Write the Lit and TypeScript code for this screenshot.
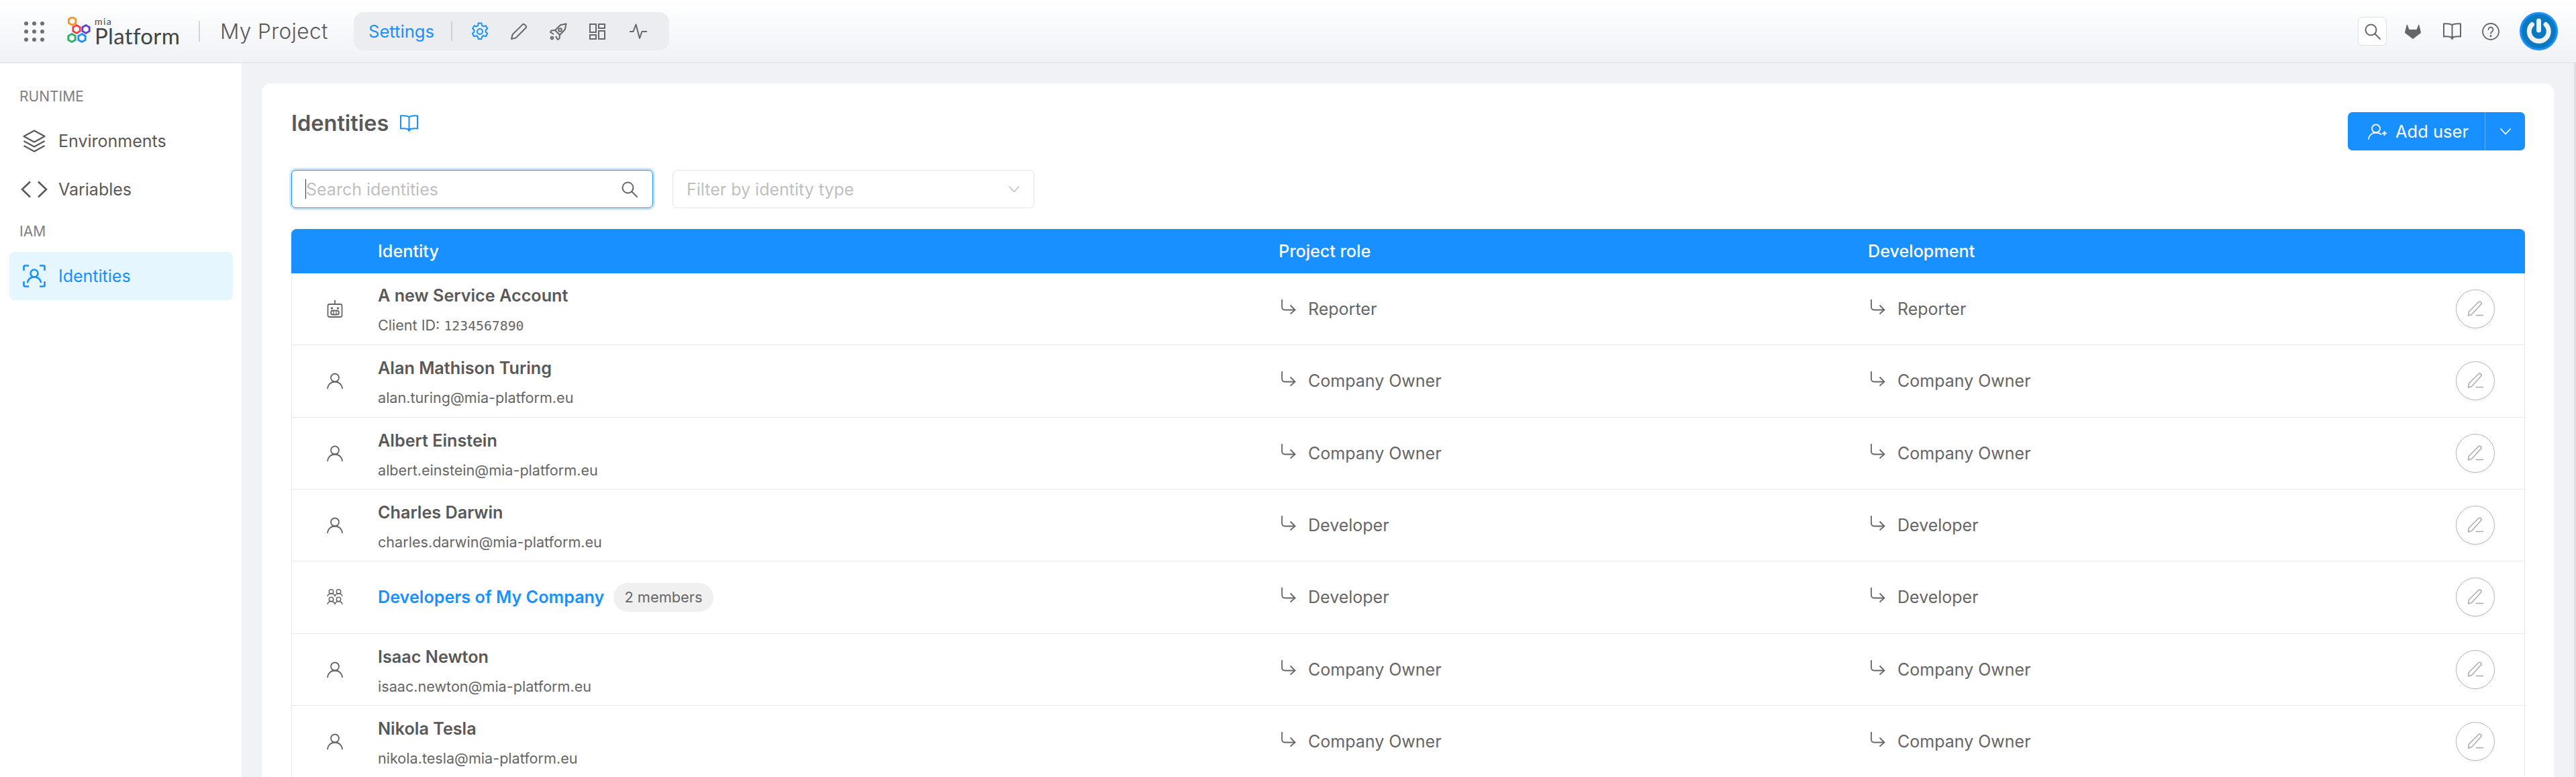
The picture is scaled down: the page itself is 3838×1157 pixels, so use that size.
import { LitElement, html, svg, css } from 'lit';
import { customElement } from 'lit/decorators.js';

const ICONS: Record<string, any> = {
  gear: html`<svg viewBox="0 0 28 28" width="28" height="28" fill="none" stroke="currentColor" stroke-width="2" stroke-linejoin="round"><path d="M11.6 1.6h4.8l.8 3.6 2.2 1.2 3.4-1.1 2.4 4.2-2.6 2.5v2.5l2.6 2.5-2.4 4.2-3.4-1.1-2.2 1.2-.8 3.6h-4.8l-.8-3.6-2.2-1.2-3.4 1.1-2.4-4.2 2.6-2.5V12L3.2 9.5l2.4-4.2L9 6.4l2.2-1.2z"/><circle cx="14" cy="14" r="4"/></svg>`,
  pencil: html`<svg viewBox="0 0 26 26" width="26" height="26" fill="none" stroke="currentColor" stroke-width="2" stroke-linejoin="round"><path d="M2 24l1.6-6.6L18.5 2.6a2.2 2.2 0 0 1 3.1 0l1.8 1.8a2.2 2.2 0 0 1 0 3.1L8.6 22.4z"/></svg>`,
  rocket: html`<svg viewBox="0 0 26 26" width="26" height="26" fill="none" stroke="currentColor" stroke-width="2" stroke-linejoin="round"><path d="M24.5 1.5l-8.5 1.8L8 11l7 7 7.7-8z"/><path d="M8 11l-5.5.5L1 14l5 3M15 18l-.5 5.5L12 25l-3-5"/><circle cx="15.5" cy="10.5" r="2.3"/><circle cx="3.5" cy="22.5" r="1.8"/></svg>`,
  dash: html`<svg viewBox="0 0 24 24" width="24" height="24" fill="none" stroke="currentColor" stroke-width="2"><rect x="1" y="1" width="9" height="12"/><rect x="14" y="1" width="9" height="6"/><rect x="1" y="17" width="9" height="6"/><rect x="14" y="11" width="9" height="12"/></svg>`,
  pulse: html`<svg viewBox="0 0 26 24" width="26" height="24" fill="none" stroke="currentColor" stroke-width="2" stroke-linejoin="round"><path d="M0 12h5.5L9.5 1.5 15 22l3.5-10H26"/></svg>`,
  search: html`<svg viewBox="0 0 26 26" width="26" height="26" fill="none" stroke="currentColor" stroke-width="2"><circle cx="10.5" cy="10.5" r="8"/><path d="M16.5 16.5l7.5 7.5" stroke-linecap="round"/></svg>`,
  gitlab: html`<svg viewBox="0 0 24 22" width="24" height="22" fill="currentColor"><path d="M12 22L.6 13.4C0 13 0 12.4.1 11.8L2.8.8c.1-.4.6-.4.8 0L6.5 8h11L20.4.8c.2-.4.7-.4.8 0l2.7 11c.1.6.1 1.2-.5 1.6z"/></svg>`,
  book: html`<svg viewBox="0 0 27 25" width="27" height="25" fill="none" stroke="currentColor" stroke-width="2"><path d="M13.5 3.5C11 1.5 6 1 1 1.5v19c5-.4 10 0 12.5 1.5C16 20.5 21 20.1 26 20.5v-19c-5-.5-10 0-12.5 2zM13.5 3.5V22"/><path d="M12 22l1.5 2 1.5-2"/></svg>`,
  help: html`<svg viewBox="0 0 26 26" width="26" height="26" fill="none" stroke="currentColor" stroke-width="1.8"><circle cx="13" cy="13" r="12"/><path d="M9.5 10a3.5 3.5 0 1 1 5.5 2.9c-1.2.8-2 1.4-2 2.9" stroke-linecap="round"/><circle cx="13" cy="19.5" r=".7" fill="currentColor"/></svg>`,
  layers: html`<svg viewBox="0 0 34 34" width="34" height="34" fill="none" stroke="currentColor" stroke-width="2.2" stroke-linejoin="round"><path d="M17 1.5L32.5 10 17 18.5 1.5 10z"/><path d="M1.5 17L17 25.5 32.5 17"/><path d="M1.5 24L17 32.5 32.5 24"/></svg>`,
  code: html`<svg viewBox="0 0 40 26" width="40" height="26" fill="none" stroke="currentColor" stroke-width="2.6"><path d="M14 1.5L2 13l12 11.5M26 1.5L38 13 26 24.5"/></svg>`,
  scan: html`<svg viewBox="0 0 34 34" width="34" height="34" fill="none" stroke="currentColor" stroke-width="2.6" stroke-linejoin="round"><path d="M9 1.5H3A1.5 1.5 0 0 0 1.5 3v6M25 1.5h6A1.5 1.5 0 0 1 32.5 3v6M9 32.5H3A1.5 1.5 0 0 1 1.5 31v-6M25 32.5h6a1.5 1.5 0 0 0 1.5-1.5v-6"/><circle cx="17" cy="13" r="5.5"/><path d="M7 26c1.5-5 5.5-7.5 10-7.5S25.5 21 27 26" stroke-linecap="round"/></svg>`,
  robot: html`<svg viewBox="0 0 24 26" width="24" height="26" fill="none" stroke="currentColor" stroke-width="1.8"><path d="M12 0v6"/><rect x="1.5" y="6" width="21" height="19" rx="2.5"/><circle cx="7.5" cy="12" r=".8" fill="currentColor"/><circle cx="16.5" cy="12" r=".8" fill="currentColor"/><rect x="6" y="15.5" width="12" height="6" rx="3"/><path d="M10 15.5v6M14 15.5v6" stroke-width="1.2"/></svg>`,
  user: html`<svg viewBox="0 0 24 24" width="24" height="24" fill="none" stroke="currentColor" stroke-width="1.8"><circle cx="12" cy="7.5" r="6"/><path d="M1 23.5c.6-6 5-10 11-10s10.4 4 11 10" stroke-linecap="round"/></svg>`,
  group: html`<svg viewBox="0 0 24 24" width="24" height="24" fill="none" stroke="currentColor" stroke-width="1.5"><circle cx="6.5" cy="4" r="3.2"/><circle cx="17.5" cy="4" r="3.2"/><path d="M1 11c.4-2.5 2.5-4 5.5-4s5 1.5 5.5 4c.5-2.5 2.5-4 5.5-4s5.1 1.5 5.5 4"/><circle cx="6.5" cy="15.5" r="3.2"/><circle cx="17.5" cy="15.5" r="3.2"/><path d="M1 23c.4-3 2.5-4.5 5.5-4.5s5 1.5 5.5 4.5c.5-3 2.5-4.5 5.5-4.5s5.1 1.5 5.5 4.5"/></svg>`,
  arrow: html`<svg viewBox="0 0 23 22" width="23" height="22" fill="none" stroke="currentColor" stroke-width="1.8"><path d="M2 0v11c0 3 1.5 4.5 4.5 4.5H21"/><path d="M14.5 8.5l7 7-7 6"/></svg>`,
  edit: html`<svg viewBox="0 0 24 24" width="24" height="24" fill="none" stroke="currentColor" stroke-width="1.6" stroke-linejoin="round"><path d="M1.5 22l1-6L16.8 1.8a2.3 2.3 0 0 1 3.2 0l.3.3a2.3 2.3 0 0 1 0 3.2L6.5 20.5z"/><path d="M12.5 21.5h11.5"/></svg>`,
  addUser: html`<svg viewBox="0 0 28 24" width="28" height="24" fill="none" stroke="currentColor" stroke-width="1.8"><circle cx="12" cy="7.5" r="6"/><path d="M1 23c.6-5.5 5-9.5 11-9.5 3 0 5.5 1 7.5 2.5" stroke-linecap="round"/><path d="M21 14.5h7M24.5 11v7"/></svg>`,
  chevron: html`<svg viewBox="0 0 18 12" width="18" height="12" fill="none" stroke="currentColor" stroke-width="1.8"><path d="M1.5 1.5L9 9.5l7.5-8"/></svg>`,
};

const USERS = [
  { icon: 'robot', name: 'A new Service Account', clientId: '1234567890', role: 'Reporter' },
  { icon: 'user', name: 'Alan Mathison Turing', sub: 'alan.turing@mia-platform.eu', role: 'Company Owner' },
  { icon: 'user', name: 'Albert Einstein', sub: 'albert.einstein@mia-platform.eu', role: 'Company Owner' },
  { icon: 'user', name: 'Charles Darwin', sub: 'charles.darwin@mia-platform.eu', role: 'Developer' },
  { icon: 'group', name: 'Developers of My Company', members: '2 members', role: 'Developer' },
  { icon: 'user', name: 'Isaac Newton', sub: 'isaac.newton@mia-platform.eu', role: 'Company Owner' },
  { icon: 'user', name: 'Nikola Tesla', sub: 'nikola.tesla@mia-platform.eu', role: 'Company Owner' },
];

const HEXES = [
  { x: 8.7, y: 6.5, c: '#f7931e' },
  { x: 15, y: 18.5, c: '#ef3e4a' },
  { x: 29, y: 18.5, c: '#5b3fd6' },
  { x: 8, y: 31.5, c: '#27ae60' },
  { x: 23, y: 31.5, c: '#1890ff' },
];

const hexPoints = (x: number, y: number) => {
  const r = 6;
  return [0, 60, 120, 180, 240, 300]
    .map((a) => {
      const t = ((a - 90) * Math.PI) / 180;
      return `${x + r * Math.cos(t)},${y + r * Math.sin(t)}`;
    })
    .join(' ');
};

@customElement('app-root')
export class AppRoot extends LitElement {
  static styles = css`
    :host {
      display: block;
      height: 100vh;
      overflow: hidden;
      font-family: Inter, "Liberation Sans", sans-serif;
      color: #595959;
      background: #f0f2f6;
    }
    .topbar {
      height: 93px;
      border-bottom: 1px solid #d9dbe0;
      background: linear-gradient(#fff, #f0f2f6);
      display: flex;
      align-items: center;
      padding-right: 27px;
    }
    .apps {
      margin-left: 36px;
      width: 30px;
      height: 30px;
      display: grid;
      grid-template-columns: repeat(3, 6px);
      grid-template-rows: repeat(3, 6px);
      justify-content: space-between;
      align-content: space-between;
    }
    .apps i {
      background: #707070;
      border-radius: 50%;
    }
    .logo {
      margin-left: 33px;
      display: flex;
      align-items: center;
      width: 197px;
    }
    .logo-mark {
      width: 42px;
      height: 44px;
      flex: none;
    }
    .logo-text {
      color: #3f4547;
      font-family: Lato, sans-serif;
      line-height: 1;
    }
    .logo-mia {
      font-size: 14px;
      height: 12px;
      line-height: 12px;
      letter-spacing: 1.4px;
    }
    .logo-name {
      font-size: 33px;
      height: 30px;
      line-height: 30px;
      letter-spacing: 0.35px;
    }
    .top-sep {
      width: 2px;
      height: 31px;
      background: #d4d4d6;
    }
    .project {
      margin-left: 30px;
      font-size: 31.5px;
      font-weight: 300;
      letter-spacing: 0.4px;
      color: #595959;
      width: 199px;
      white-space: nowrap;
    }
    .tabs {
      height: 57px;
      width: 470px;
      border-radius: 15px;
      background: #ecedf0;
      display: flex;
      align-items: center;
      color: #666;
      box-sizing: border-box;
      padding-left: 22px;
    }
    .tabs .settings {
      color: #1890ff;
      font-size: 25.6px;
      width: 124px;
    }
    .tabs .sep {
      width: 2px;
      height: 29px;
      background: #cfcfd1;
      margin-right: 27px;
    }
    .tabs .tab {
      width: 60px;
      display: flex;
      justify-content: flex-start;
    }
    .tabs .tab.on {
      color: #1890ff;
    }
    .top-right {
      margin-left: auto;
      display: flex;
      align-items: center;
      color: #666;
    }
    .top-search {
      width: 43px;
      height: 43px;
      box-sizing: border-box;
      border: 1px solid #dedede;
      border-radius: 7px;
      background: #fff;
      display: flex;
      align-items: center;
      justify-content: center;
      margin-right: 10px;
    }
    .top-icon {
      width: 58px;
      display: flex;
      justify-content: center;
    }
    .avatar {
      margin-left: 14px;
      width: 57px;
      height: 57px;
    }
    .body {
      display: flex;
      height: calc(100vh - 94px);
    }
    .sidebar {
      width: 360px;
      flex: none;
      background: #fff;
      box-sizing: border-box;
      padding-top: 23px;
    }
    .side-label {
      height: 54px;
      line-height: 54px;
      margin-bottom: 3px;
      padding-left: 29px;
      font-size: 21px;
      color: #7f7f7f;
    }
    .side-item {
      height: 72px;
      width: 333px;
      margin-left: 14px;
      border-radius: 8px;
      display: flex;
      align-items: center;
      font-size: 25px;
      color: #595959;
    }
    .side-item .ic {
      width: 73px;
      flex: none;
      display: flex;
      justify-content: center;
    }
    .side-item.on {
      background: #e6f6ff;
      color: #1890ff;
    }
    .main {
      flex: 1;
      box-sizing: border-box;
      padding: 30px 30px 0;
      border-right: 3px solid #dfe0e2;
      min-width: 0;
    }
    .card {
      background: #fff;
      border-radius: 14px 14px 0 0;
      padding: 43px 43px 0 44px;
      min-height: 100%;
      box-sizing: border-box;
    }
    .title-row {
      height: 57px;
      margin-bottom: 29px;
      display: flex;
      align-items: flex-start;
      justify-content: space-between;
    }
    .title {
      display: flex;
      align-items: center;
      height: 32px;
      font-size: 32.5px;
      font-weight: 600;
      color: #595959;
    }
    .title svg {
      margin-left: 17px;
      color: #1890ff;
    }
    .add {
      height: 57px;
      width: 264px;
      border-radius: 7px;
      background: #1890ff;
      color: #fff;
      display: flex;
      align-items: center;
      font-size: 25.5px;
      box-shadow: 0 3px 0 rgba(0, 0, 0, 0.02);
    }
    .add-main {
      flex: 1;
      height: 100%;
      display: flex;
      align-items: center;
      gap: 13px;
      padding-left: 30px;
      border-right: 1px solid #5aaefb;
    }
    .add-drop {
      width: 59px;
      display: flex;
      justify-content: center;
    }
    .filters {
      display: flex;
      gap: 29px;
      margin-bottom: 31px;
    }
    .input {
      height: 57px;
      box-sizing: border-box;
      border-radius: 7px;
      display: flex;
      align-items: center;
      font-size: 25px;
      color: #bfbfbf;
      background: #fff;
    }
    .input.search {
      width: 539px;
      border: 1px solid #1890ff;
      box-shadow: 0 0 0 3px rgba(24, 144, 255, 0.2);
      padding: 0 21px 0 20px;
    }
    .input.search .caret {
      width: 1px;
      height: 29px;
      background: #333;
      flex: none;
    }
    .input.search svg {
      margin-left: auto;
      color: #666;
    }
    .input.select {
      width: 539px;
      border: 1px solid #e4e4e4;
      padding: 0 20px;
      justify-content: space-between;
    }
    .input.select svg {
      color: #c4c4c4;
    }
    .table {
      border-left: 1px solid #e8e8e8;
      border-right: 1px solid #e8e8e8;
    }
    .thead,
    .row {
      display: grid;
      grid-template-columns: 128px 1342px 878px 1fr 102px;
      align-items: center;
    }
    .thead {
      height: 66px;
      margin: 0 -1px;
      padding: 0 1px;
      background: #1890ff;
      color: #fff;
      font-size: 25.2px;
      font-weight: 500;
      border-radius: 8px 8px 0 0;
    }
    .row {
      height: 107.33px;
      box-sizing: border-box;
      border-bottom: 1px solid #e8e8e8;
    }
    .row-icon {
      display: flex;
      justify-content: center;
      color: #666;
      padding-right: 1px;
    }
    .who.two {
      padding-top: 6px;
    }
    .name {
      font-size: 25.2px;
      font-weight: 600;
      line-height: 44px;
      color: #595959;
      display: flex;
      align-items: center;
    }
    .name.link {
      color: #1890ff;
    }
    .badge {
      margin-left: 14px;
      height: 43px;
      padding: 0 16px;
      border-radius: 22px;
      background: #f0f0f0;
      font-size: 21.8px;
      font-weight: 400;
      color: #666;
      display: inline-flex;
      align-items: center;
    }
    .sub {
      font-size: 21.6px;
      line-height: 44px;
      color: #666;
    }
    .mono {
      font-family: "DejaVu Sans Mono", monospace;
      font-size: 19.8px;
    }
    .role {
      display: flex;
      align-items: center;
      gap: 18px;
      font-size: 25px;
      color: #666;
      padding-left: 3px;
    }
    .role svg {
      position: relative;
      top: -3px;
    }
    .edit-cell {
      display: flex;
      justify-content: flex-start;
    }
    .edit {
      width: 58px;
      height: 58px;
      box-sizing: border-box;
      border: 1px solid #b5b5b5;
      border-radius: 50%;
      background: #fff;
      color: #adadad;
      display: flex;
      align-items: center;
      justify-content: center;
      box-shadow: 0 3px 3px rgba(0, 0, 0, 0.03);
    }
  `;

  renderRow(u: any) {
    return html`
      <div class="row">
        <div class="row-icon">${ICONS[u.icon]}</div>
        <div class="who ${u.members ? '' : 'two'}">
          <div class="name ${u.members ? 'link' : ''}">
            ${u.name}${u.members ? html`<span class="badge">${u.members}</span>` : ''}
          </div>
          ${u.sub ? html`<div class="sub">${u.sub}</div>` : ''}
          ${u.clientId ? html`<div class="sub">Client ID: <span class="mono">${u.clientId}</span></div>` : ''}
        </div>
        <div class="role">${ICONS.arrow}<span>${u.role}</span></div>
        <div class="role">${ICONS.arrow}<span>${u.role}</span></div>
        <div class="edit-cell"><div class="edit">${ICONS.edit}</div></div>
      </div>
    `;
  }

  render() {
    return html`
      <div class="topbar">
        <div class="apps">${[...Array(9)].map(() => html`<i></i>`)}</div>
        <div class="logo">
          <svg class="logo-mark" viewBox="0 0 42 44" fill="none" stroke-width="2.8">
            ${HEXES.map((h) => svg`<polygon points=${hexPoints(h.x, h.y)} stroke=${h.c}></polygon>`)}
          </svg>
          <div class="logo-text">
            <div class="logo-mia">mia</div>
            <div class="logo-name">Platform</div>
          </div>
        </div>
        <div class="top-sep"></div>
        <div class="project">My Project</div>
        <div class="tabs">
          <div class="settings">Settings</div>
          <div class="sep"></div>
          <div class="tab on">${ICONS.gear}</div>
          <div class="tab">${ICONS.pencil}</div>
          <div class="tab">${ICONS.rocket}</div>
          <div class="tab">${ICONS.dash}</div>
          <div class="tab">${ICONS.pulse}</div>
        </div>
        <div class="top-right">
          <div class="top-search">${ICONS.search}</div>
          <div class="top-icon">${ICONS.gitlab}</div>
          <div class="top-icon">${ICONS.book}</div>
          <div class="top-icon">${ICONS.help}</div>
          <svg class="avatar" viewBox="0 0 57 57">
            <circle cx="28.5" cy="28.5" r="27" fill="#0b78bf" stroke="#1890ff" stroke-width="3"></circle>
            <path d="M18.5 18.5a14.5 14.5 0 1 0 20.5 0" fill="none" stroke="#f2f2f2" stroke-width="7" stroke-linecap="round"></path>
            <path d="M28.5 13v14" fill="none" stroke="#f2f2f2" stroke-width="7" stroke-linecap="round"></path>
          </svg>
        </div>
      </div>
      <div class="body">
        <div class="sidebar">
          <div class="side-label">RUNTIME</div>
          <div class="side-item"><span class="ic">${ICONS.layers}</span>Environments</div>
          <div class="side-item"><span class="ic">${ICONS.code}</span>Variables</div>
          <div class="side-label">IAM</div>
          <div class="side-item on"><span class="ic">${ICONS.scan}</span>Identities</div>
        </div>
        <div class="main">
          <div class="card">
            <div class="title-row">
              <div class="title">Identities ${ICONS.book}</div>
              <div class="add">
                <div class="add-main">${ICONS.addUser}<span>Add user</span></div>
                <div class="add-drop">${ICONS.chevron}</div>
              </div>
            </div>
            <div class="filters">
              <div class="input search">
                <span class="caret"></span><span>Search identities</span>${ICONS.search}
              </div>
              <div class="input select"><span>Filter by identity type</span>${ICONS.chevron}</div>
            </div>
            <div class="table">
              <div class="thead">
                <div></div>
                <div>Identity</div>
                <div>Project role</div>
                <div>Development</div>
                <div></div>
              </div>
              ${USERS.map((u) => this.renderRow(u))}
            </div>
          </div>
        </div>
      </div>
    `;
  }
}
